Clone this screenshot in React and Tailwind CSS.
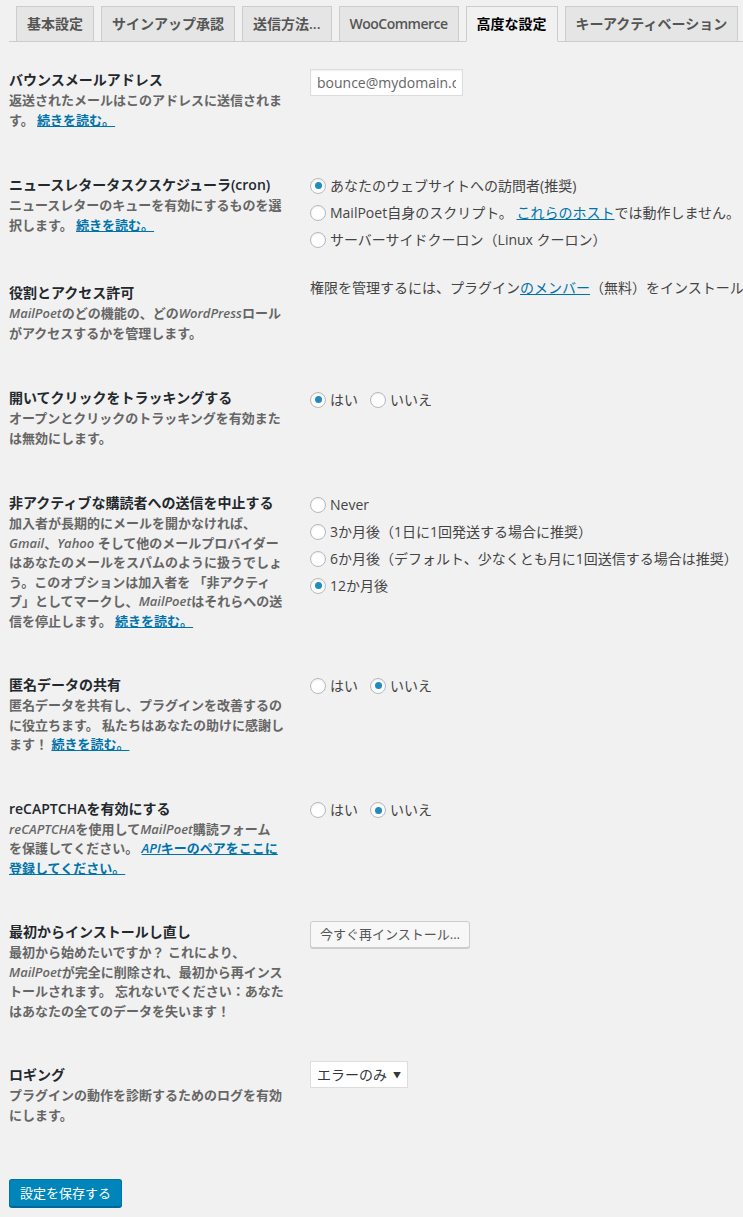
import React from 'react';

const tabs = ['基本設定', 'サインアップ承認', '送信方法...', 'WooCommerce', '高度な設定', 'キーアクティベーション'];

const Radio = ({ checked }) => (
  <span className="w-4 h-4 rounded-full border border-[#b4b9be] bg-white shadow-[inset_0_1px_2px_rgba(0,0,0,0.07)] flex items-center justify-center shrink-0">
    {checked && <span className="w-[7px] h-[7px] rounded-full bg-[#1e8cbe]" />}
  </span>
);

const Option = ({ checked, children }) => (
  <label className="flex items-center h-[27px] gap-1 text-[14px] leading-[20px] text-[#444] whitespace-nowrap">
    <Radio checked={checked} />
    <span>{children}</span>
  </label>
);

const Link = ({ children }) => (
  <a href="#" className="text-[#0073aa] underline">{children}</a>
);

const B = ({ children }) => <em className="italic">{children}</em>;

const Row = ({ label, desc, children, pb = 'pb-[45px]', rightOffset = '' }) => (
  <div className={`flex items-start ${pb}`}>
    {/* label column */}
    <div className="w-[301px] shrink-0 pr-[20px] font-semibold">
      <div className="text-[14px] leading-[20px] text-[#23282d] whitespace-nowrap">{label}</div>
      <p className="mt-px text-[13px] leading-[19.5px] text-[#666] whitespace-nowrap">{desc}</p>
    </div>
    {/* field column */}
    <div className={`flex-1 min-w-0 ${rightOffset}`}>{children}</div>
  </div>
);

const YesNo = ({ yes }) => (
  <div className="flex gap-[12px]">
    <Option checked={yes}>はい</Option>
    <Option checked={!yes}>いいえ</Option>
  </div>
);

export default function App() {
  return (
    <div className="min-h-screen w-full overflow-hidden bg-[#f1f1f1] font-['Open_Sans','Noto_Sans_CJK_JP',sans-serif]">
      {/* Tabs */}
      <div className="ml-[9px] flex items-end pt-[6px] border-b border-[#ccc] whitespace-nowrap">
        {tabs.map((t) => {
          const active = t === '高度な設定';
          return (
            <div
              key={t}
              className={`ml-[7px] -mb-px h-[36px] px-[10px] border border-[#ccc] text-[14px] font-semibold leading-[34px] shrink-0 ${
                t === 'WooCommerce' ? 'tracking-[-0.5px]' : ''
              } ${active ? 'bg-[#f1f1f1] border-b-[#f1f1f1] text-black' : 'bg-[#e5e5e5] text-[#555]'}`}
            >
              {t}
            </div>
          );
        })}
      </div>

      <div className="pl-[9px] pt-[28px]">
        <Row
          label="バウンスメールアドレス"
          desc={<>返送されたメールはこのアドレスに送信されま<br />す。 <Link>続きを読む。</Link></>}
          rightOffset="-mt-px"
        >
          <input
            readOnly
            value="bounce@mydomain.com"
            className="block w-[153px] h-[27px] bg-white border border-[#ddd] shadow-[inset_0_1px_2px_rgba(0,0,0,0.07)] px-[6px] text-[14px] text-[#666] outline-none"
          />
        </Row>

        <Row
          label="ニュースレタータスクスケジューラ(cron)"
          desc={<>ニュースレターのキューを有効にするものを選<br />択します。 <Link>続きを読む。</Link></>}
          pb="pb-[30px]"
          rightOffset="-mt-[3px]"
        >
          <Option checked>あなたのウェブサイトへの訪問者(推奨)</Option>
          <Option>MailPoet自身のスクリプト。 <Link>これらのホスト</Link>では動作しません。</Option>
          <Option>サーバーサイドクーロン（Linux クーロン）</Option>
        </Row>

        <Row
          label="役割とアクセス許可"
          desc={<><B>MailPoet</B>のどの機能の、どの<B>WordPress</B>ロール<br />がアクセスするかを管理します。</>}
          rightOffset="-mt-[5px]"
        >
          <div className="text-[14px] leading-[20px] text-[#444] whitespace-nowrap">
            権限を管理するには、プラグイン<Link>のメンバー</Link>（無料）をインストールしてください。
          </div>
        </Row>

        <Row
          label="開いてクリックをトラッキングする"
          desc={<>オープンとクリックのトラッキングを有効また<br />は無効にします。</>}
          rightOffset="-mt-[2px]"
        >
          <YesNo yes />
        </Row>

        <Row
          label="非アクティブな購読者への送信を中止する"
          desc={
            <>
              加入者が長期的にメールを開かなければ、<br />
              <B>Gmail</B>、<B>Yahoo</B> そして他のメールプロバイダー<br />
              はあなたのメールをスパムのように扱うでしょ<br />
              う。このオプションは加入者を 「非アクティ<br />
              ブ」としてマークし、<B>MailPoet</B>はそれらへの送<br />
              信を停止します。 <Link>続きを読む。</Link>
            </>
          }
          pb="pb-[44px]"
          rightOffset="-mt-[2px]"
        >
          <Option>Never</Option>
          <Option>3か月後（1日に1回発送する場合に推奨）</Option>
          <Option>6か月後（デフォルト、少なくとも月に1回送信する場合は推奨）</Option>
          <Option checked>12か月後</Option>
        </Row>

        <Row
          label="匿名データの共有"
          desc={
            <>
              匿名データを共有し、プラグインを改善するの<br />
              に役立ちます。 私たちはあなたの助けに感謝し<br />
              ます！ <Link>続きを読む。</Link>
            </>
          }
          pb="pb-[44px]"
          rightOffset="-mt-[3px]"
        >
          <YesNo yes={false} />
        </Row>

        <Row
          label="reCAPTCHAを有効にする"
          desc={
            <>
              <B>reCAPTCHA</B>を使用して<B>MailPoet</B>購読フォーム<br />
              を保護してください。 <Link><B>API</B>キーのペアをここに</Link><br />
              <Link>登録してください。</Link>
            </>
          }
          pb="pb-[44px]"
          rightOffset="-mt-[2px]"
        >
          <YesNo yes={false} />
        </Row>

        <Row
          label="最初からインストールし直し"
          desc={
            <>
              最初から始めたいですか？ これにより、<br />
              <B>MailPoet</B>が完全に削除され、最初から再インス<br />
              トールされます。 忘れないでください：あなた<br />
              はあなたの全てのデータを失います！
            </>
          }
          pb="pb-[44px]"
          rightOffset="-mt-px"
        >
          <button className="h-[27px] px-[9px] bg-[#f7f7f7] border border-[#ccc] rounded-[3px] shadow-[0_1px_0_#ccc] text-[13px] leading-[25px] text-[#555] whitespace-nowrap">
            今すぐ再インストール...
          </button>
        </Row>

        <Row
          label="ロギング"
          desc={<>プラグインの動作を診断するためのログを有効<br />にします。</>}
          rightOffset="-mt-[4px]"
        >
          <div className="w-[98px] h-[27px] bg-white border border-[#ddd] flex items-center justify-between pl-[6px] pr-[6px] text-[14px] text-[#32373c] whitespace-nowrap">
            <span>エラーのみ</span>
            <span className="text-[8px] leading-none">▼</span>
          </div>
        </Row>

        <div className="mt-[9px] pb-[8px]">
          <button className="h-[28px] px-[10px] bg-[#0085ba] border border-[#0073aa] border-b-[#006799] rounded-[3px] shadow-[0_1px_0_#006799] text-[13px] leading-[26px] text-white whitespace-nowrap">
            設定を保存する
          </button>
        </div>
      </div>
    </div>
  );
}
